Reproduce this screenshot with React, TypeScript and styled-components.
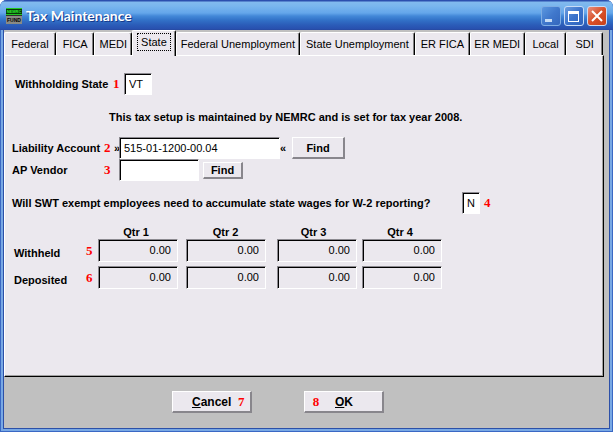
import React from "react";
import styled, { createGlobalStyle, css } from "styled-components";

const face = "#ebe8ee";
const sans = '"Liberation Sans", Arial, sans-serif';

const GlobalStyle = createGlobalStyle`
  *, *::before, *::after { box-sizing: border-box; }
  html, body, #root { height: 100%; }
  body {
    margin: 0;
    background: #ffffff;
    color: #000000;
    font: 11px/14px ${sans};
  }
`;

const Window = styled.main`
  display: flex;
  flex-direction: column;
  min-height: 100%;
  padding: 0 4px 4px;
  overflow: hidden;
  border-radius: 7px 7px 0 0;
  background: #2c50a8;
  box-shadow: inset 1px 0 #3a68c4, inset -1px 0 #3a68c4, inset 0 -1px #3a68c4,
    inset 3px 0 #78a8e4, inset -3px 0 #78a8e4, inset 0 -3px #78a8e4;
`;

const TitleBar = styled.header`
  display: flex;
  align-items: center;
  height: 30px;
  margin: 0 -4px;
  padding: 2px 6px 0;
  background: linear-gradient(
    #2c4fae 0, #2c4fae 1px, #82baee 2px, #7ab6ee 6px, #64a6ea 13px,
    #4388d8 16px, #3272c8 20px, #2b5cb8 25px, #2850ae 29px, #27479c 30px
  );
`;

const Title = styled.h1`
  flex: 1;
  margin: 0 0 0 4px;
  color: #ffffff;
  font: bold 14px/18px Lato, "Open Sans", sans-serif;
  text-shadow: 1px 1px #153a8c;
`;

const WindowButtons = styled.div`
  display: flex;
  gap: 3px;
`;

const WindowButton = styled.button<{ $kind: "min" | "max" | "close" }>`
  width: 20px;
  height: 20px;
  padding: 0;
  border: 1px solid ${(p) => (p.$kind === "min" ? "#7eade4" : "#c8dcf6")};
  border-radius: 3px;
  background: ${(p) =>
    p.$kind === "close"
      ? "linear-gradient(135deg, #e89080, #d85028 50%, #c84018)"
      : p.$kind === "max"
        ? "linear-gradient(135deg, #6c9ee0, #3c74cc 50%, #2e62bc)"
        : "linear-gradient(135deg, #5c98e0, #4078cc 50%, #3467bd)"};
  svg { display: block; }
`;

const Client = styled.div`
  display: flex;
  flex: 1;
  flex-direction: column;
  background: #c0c0c0;
`;

const TabList = styled.div`
  display: flex;
  align-items: flex-end;
  height: 25px;
  margin-right: 6px;
`;

const Tab = styled.button<{ $grow: number; $active: boolean }>`
  flex: ${(p) => p.$grow} 1 0;
  min-width: 0;
  height: 23px;
  padding: 0;
  border: solid;
  border-width: 1px 1px 0 1px;
  border-color: #ffffff #000000 #ffffff #ffffff;
  border-radius: 2px 2px 0 0;
  box-shadow: inset -1px 0 #808080;
  background: ${face};
  color: #000000;
  font: 11px/14px ${sans};
  white-space: nowrap;
  ${(p) =>
    p.$active &&
    css`
      z-index: 1;
      height: 26px;
      margin-bottom: -1px;
      padding-bottom: 3px;
    `}
`;

const TabLabel = styled.span<{ $active: boolean }>`
  display: inline-block;
  padding: 1px 3px;
  outline: ${(p) => (p.$active ? "1px dotted #000000" : "none")};
`;

const Panel = styled.section`
  display: flex;
  flex: 1;
  flex-direction: column;
  align-items: flex-start;
  margin-right: 5px;
  padding: 17px 7px 12px;
  border: 1px solid;
  border-color: #ffffff #000000 #000000 #ffffff;
  box-shadow: inset -1px -1px #a0a0a0;
  background: ${face};
  font-weight: bold;
  white-space: nowrap;
`;

const Row = styled.div<{ $top?: number; $indent?: number }>`
  display: flex;
  align-items: center;
  height: 22px;
  margin-top: ${(p) => p.$top ?? 0}px;
  margin-left: ${(p) => p.$indent ?? 0}px;
`;

const Label = styled.label<{ $width?: number }>`
  width: ${(p) => (p.$width ? `${p.$width}px` : "auto")};
`;

const Notice = styled.p`
  margin: 15px 0 0 97px;
`;

const Step = styled.span<{ $width?: number }>`
  display: inline-block;
  width: ${(p) => p.$width ?? 10}px;
  color: #ff0000;
  font: bold 13px/14px "Liberation Serif", "Times New Roman", serif;
`;

const Mark = styled.span<{ $width: number }>`
  width: ${(p) => p.$width}px;
`;

const Field = styled.input<{ $width: number }>`
  width: ${(p) => p.$width}px;
  height: 22px;
  padding: 0 3px 0 4px;
  border: 1px solid;
  border-color: #8c8a90 #ffffff #ffffff #8c8a90;
  border-radius: 0;
  outline: 0;
  box-shadow: inset 1px 1px #000000;
  background: #ffffff;
  color: #000000;
  font: 11px/14px ${sans};
`;

const Amount = styled(Field)`
  display: block;
  height: 23px;
  padding: 0 6px 2px;
  background: ${face};
  text-align: right;
`;

const PushButton = styled.button<{ $width: number; $height?: number }>`
  width: ${(p) => p.$width}px;
  height: ${(p) => p.$height ?? 22}px;
  padding: 0;
  border: solid;
  border-width: 1px 2px 2px 1px;
  border-color: #ffffff #88868c #88868c #ffffff;
  background: ${face};
  color: #000000;
  font: bold 11px/14px ${sans};
`;

const Quarters = styled.table`
  margin: 12px 0 0 2px;
  border-collapse: collapse;
  table-layout: fixed;
  th, td { padding: 0 0 4px; text-align: left; }
  tbody th { padding: 0; }
  thead th { padding: 0 12px 0 0; line-height: 13px; text-align: center; }
`;

const Col = styled.col<{ $width: number }>`
  width: ${(p) => p.$width}px;
`;

const Footer = styled.footer`
  display: flex;
  justify-content: center;
  gap: 52px;
  margin-right: 57px;
  padding: 14px 0 15px;
`;

const FooterButton = styled(PushButton)`
  display: flex;
  align-items: center;
  gap: 5px;
  padding-left: 19px;
  font-size: 12px;
`;

const OkButton = styled(FooterButton)`
  gap: 14px;
  padding-left: 6px;
`;

const tabs = [
  { name: "Federal", grow: 49 },
  { name: "FICA", grow: 36 },
  { name: "MEDI", grow: 35 },
  { name: "State", grow: 41 },
  { name: "Federal Unemployment", grow: 120 },
  { name: "State Unemployment", grow: 111 },
  { name: "ER FICA", grow: 52 },
  { name: "ER MEDI", grow: 52 },
  { name: "Local", grow: 39 },
  { name: "SDI", grow: 34 },
];

const quarters = ["Qtr 1", "Qtr 2", "Qtr 3", "Qtr 4"];
const totals = [
  { name: "Withheld", step: 5 },
  { name: "Deposited", step: 6 },
];

function Logo() {
  return (
    <svg width="16" height="16" viewBox="0 0 16 16" overflow="visible" aria-hidden="true">
      <rect width="16" height="7" fill="#083808" />
      <text x="8" y="5" fontSize="4" textAnchor="middle" fontFamily="Liberation Sans" fontWeight="bold" fill="#30f030">NEMRC</text>
      <path d="M0 .5h16M0 6.5h16" stroke="#22c822" />
      <rect y="7" width="16" height="9" fill="#8a8a84" />
      <path d="M0 7.5h16" stroke="#303030" />
      <text x="8" y="14" fontSize="5" textAnchor="middle" fontFamily="Liberation Sans" fontWeight="bold" fill="#000">FUND</text>
    </svg>
  );
}

export default function App() {
  return (
    <>
      <GlobalStyle />
      <Window>
        <TitleBar>
          <Logo />
          <Title>Tax Maintenance</Title>
          <WindowButtons>
            <WindowButton $kind="min" type="button" aria-label="Minimize">
              <svg width="18" height="18"><path d="M3 12h7v3H3z" fill="#c6dcf6" /></svg>
            </WindowButton>
            <WindowButton $kind="max" type="button" aria-label="Maximize">
              <svg width="18" height="18"><path d="M3 4h11v11H3zM4 7v7h9V7z" fill="#fff" fillRule="evenodd" /></svg>
            </WindowButton>
            <WindowButton $kind="close" type="button" aria-label="Close">
              <svg width="18" height="18"><path d="M4 4l10 10M14 4L4 14" stroke="#fff" strokeWidth="2" /></svg>
            </WindowButton>
          </WindowButtons>
        </TitleBar>
        <Client>
          <TabList role="tablist">
            {tabs.map((t) => {
              const active = t.name === "State";
              return (
                <Tab key={t.name} type="button" role="tab" aria-selected={active} $grow={t.grow} $active={active}>
                  <TabLabel $active={active}>{t.name}</TabLabel>
                </Tab>
              );
            })}
          </TabList>
          <Panel role="tabpanel">
            <Row $indent={3}>
              <Label htmlFor="state" $width={98}>Withholding State</Label>
              <Step $width={11}>1</Step>
              <Field id="state" $width={28} defaultValue="VT" />
            </Row>
            <Notice>This tax setup is maintained by NEMRC and is set for tax year 2008.</Notice>
            <Row $top={13}>
              <Label htmlFor="account" $width={92}>Liability Account</Label>
              <Step>2</Step>
              <Mark $width={5}>»</Mark>
              <Field id="account" $width={161} defaultValue="515-01-1200-00.04" />
              <Mark $width={12}>«</Mark>
              <PushButton type="button" $width={53}>Find</PushButton>
            </Row>
            <Row>
              <Label htmlFor="vendor" $width={92}>AP Vendor</Label>
              <Step $width={15}>3</Step>
              <Field id="vendor" $width={80} defaultValue="" />
              <Mark $width={4} />
              <PushButton type="button" $width={40} $height={17}>Find</PushButton>
            </Row>
            <Row $top={11}>
              <Label htmlFor="exempt" $width={450}>
                Will SWT exempt employees need to accumulate state wages for W-2 reporting?
              </Label>
              <Field id="exempt" $width={18} defaultValue="N" />
              <Mark $width={4} />
              <Step>4</Step>
            </Row>
            <Quarters>
              <colgroup>
                <Col $width={72} />
                <Col $width={12} />
                <Col $width={88} />
                <Col $width={91} />
                <Col $width={85} />
                <Col $width={88} />
              </colgroup>
              <thead>
                <tr>
                  <td />
                  <td />
                  {quarters.map((q) => <th key={q} scope="col">{q}</th>)}
                </tr>
              </thead>
              <tbody>
                {totals.map((t) => (
                  <tr key={t.name}>
                    <th scope="row">{t.name}</th>
                    <td><Step>{t.step}</Step></td>
                    {quarters.map((q) => (
                      <td key={q}>
                        <Amount $width={80} readOnly value="0.00" aria-label={`${t.name} ${q}`} />
                      </td>
                    ))}
                  </tr>
                ))}
              </tbody>
            </Quarters>
          </Panel>
          <Footer>
            <FooterButton type="button" $width={80}>
              <span><u>C</u>ancel</span>
              <Step>7</Step>
            </FooterButton>
            <OkButton type="button" $width={80}>
              <Step>8</Step>
              <span><u>O</u>K</span>
            </OkButton>
          </Footer>
        </Client>
      </Window>
    </>
  );
}
